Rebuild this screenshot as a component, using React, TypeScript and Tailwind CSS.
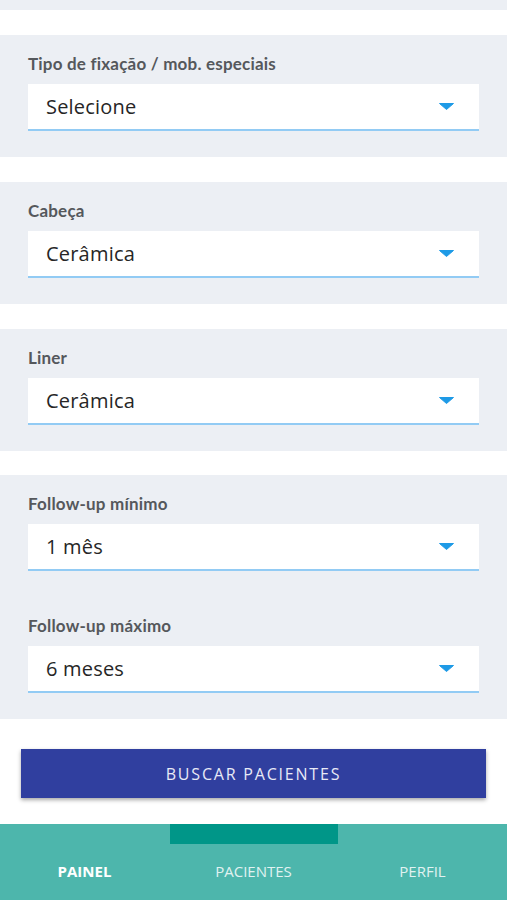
import React from "react"

const sans = "font-['Open_Sans',sans-serif]"
const labelFont = "font-['Lato',sans-serif]"

function Arrow() {
	return (
		<svg width="15" height="7" viewBox="0 0 15 7" className="shrink-0">
			<path d="M0.5 0.5 L14.5 0.5 L7.5 6.5 Z" fill="#1e9ae6" stroke="#1e9ae6" strokeLinejoin="round" />
		</svg>
	)
}

function Select({ value }: { value: string }) {
	return (
		<div className="flex h-[47px] items-center justify-between bg-white border-b-2 border-[#92cbf4] pl-[18px] pr-[25px]">
			<span className={`${sans} text-[20px] leading-[28px] text-[#262626] tracking-[0.2px]`}>{value}</span>
			<Arrow />
		</div>
	)
}

function Label({ children }: { children: React.ReactNode }) {
	return (
		<div className={`${labelFont} text-[17px] leading-[20px] font-bold tracking-[0.2px] text-[#55585c]`}>
			{children}
		</div>
	)
}

function Field({ label, value }: { label: string; value: string }) {
	return (
		<div className="flex flex-col gap-[10px]">
			<Label>{label}</Label>
			<Select value={value} />
		</div>
	)
}

const navItems = [
	{ name: "PAINEL", active: true },
	{ name: "PACIENTES", active: false },
	{ name: "PERFIL", active: false },
]

export default function App() {
	return (
		<div className="flex h-[900px] w-[507px] flex-col overflow-hidden bg-white">
			{/* end of previous section */}
			<div className="h-[10px] shrink-0 bg-[#eceff4]"></div>

			<div className="flex flex-col gap-[25px] pt-[25px]">
				<section className="h-[122px] bg-[#eceff4] px-[28px] pt-[19px]">
					<Field label="Tipo de fixação / mob. especiais" value="Selecione" />
				</section>
				<section className="h-[122px] bg-[#eceff4] px-[28px] pt-[19px]">
					<Field label="Cabeça" value="Cerâmica" />
				</section>
				<section className="h-[122px] bg-[#eceff4] px-[28px] pt-[19px]">
					<Field label="Liner" value="Cerâmica" />
				</section>
				<section className="-mt-px flex h-[244px] flex-col gap-[45px] bg-[#eceff4] px-[28px] pt-[19px]">
					<Field label="Follow-up mínimo" value="1 mês" />
					<Field label="Follow-up máximo" value="6 meses" />
				</section>
			</div>

			<div className="flex flex-1 flex-col justify-start px-[21px] pt-[30px]">
				<button
					className={`${sans} h-[49px] w-full bg-[#303f9f] text-[16px] tracking-[1.8px] text-[#e8eaf6] shadow-[0_2px_4px_rgba(0,0,0,0.35)]`}
				>
					BUSCAR PACIENTES
				</button>
			</div>

			<nav className="relative h-[76px] shrink-0 bg-[#4db6ac]">
				<div className="absolute left-[170px] top-0 h-[20px] w-[168px] bg-[#009688]"></div>
				<div className="grid h-full grid-cols-3 items-center pt-[18px]">
					{navItems.map((item) => (
						<div
							key={item.name}
							className={`${sans} text-center text-[15px] ${
								item.active ? "font-bold text-white" : "text-[#e0f2f1]"
							}`}
						>
							{item.name}
						</div>
					))}
				</div>
			</nav>
		</div>
	)
}
